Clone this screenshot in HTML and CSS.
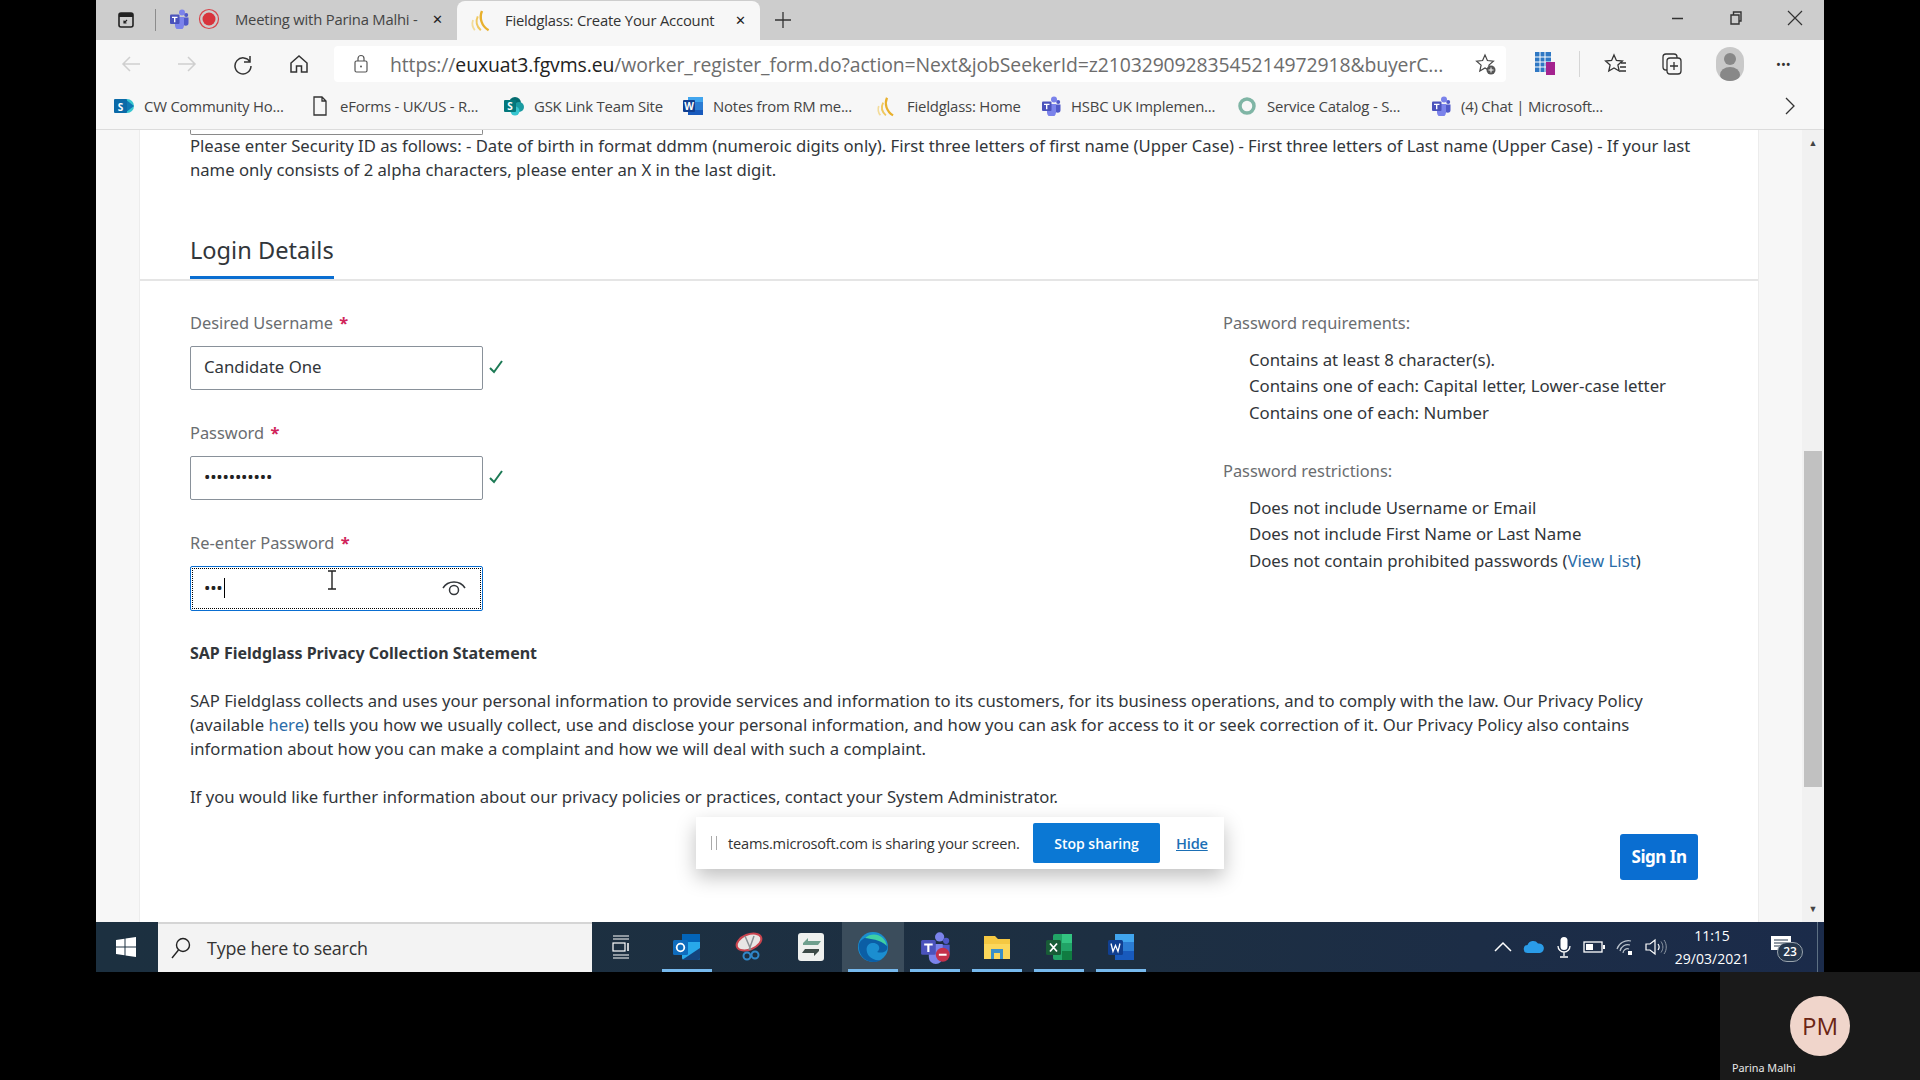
FILE: index.html
```html
<!DOCTYPE html>
<html lang="en">
<head>
    <meta charset="UTF-8">
    <title>Fieldglass: Create Your Account</title>
    <link rel="stylesheet" href="styles.css">
</head>
<body>
    <svg class="defs" width="0" height="0">
        <symbol id="teams" viewBox="0 0 20 20">
            <circle cx="13" cy="3.500" r="3" fill="#7b83eb"/>
            <circle cx="17.200" cy="6" r="2" fill="#5059c9"/>
            <path d="M14 8.500h5.500v5.500a2.700 2.700 0 0 1-5.500 0z" fill="#5059c9"/>
            <path d="M6 8h9v8.500a4.500 4.500 0 0 1-9 0z" fill="#7b83eb"/>
            <rect x="1" y="5.500" width="9.500" height="9.500" rx="1" fill="#4b53bc"/>
            <path d="M3 7.800h5.500v1.300H6.400v4.200H5V9.100H3z" fill="#fff"/>
        </symbol>
        <symbol id="fieldglass" viewBox="0 0 20 20">
            <path d="M2.500 10C1.500 13 2 16 4 18.500" fill="none" stroke="#f3dc9a" stroke-width="1.500"/>
            <path d="M6.500 7C4.500 11 5.500 15.500 9 18.500" fill="none" stroke="#efc860" stroke-width="1.700"/>
            <path d="M10 2.500C7.500 8 9.500 15 15.500 18.500" fill="none" stroke="#e8b02c" stroke-width="2"/>
        </symbol>
    </svg>

    <div class="screen">
        <!-- Tab strip -->
        <div class="tabstrip">
            <svg class="vtabs" width="18" height="18" viewBox="0 0 18 18"><rect x="2" y="2" width="14" height="14" rx="2" fill="none" stroke="#222" stroke-width="1.600"/><rect x="2" y="2" width="14" height="4" fill="#222"/><path d="M7 12l3-3M7 9.500V12h2.500" fill="none" stroke="#222" stroke-width="1.200"/></svg>
            <span class="tab-sep"></span>
            <div class="tab">
                <svg width="20" height="20"><use href="#teams"/></svg>
                <svg class="rec" width="22" height="22" viewBox="0 0 22 22"><circle cx="11" cy="11" r="9.500" fill="none" stroke="#d8434a" stroke-width="1.200"/><circle cx="11" cy="11" r="6.500" fill="#d8343c"/></svg>
                <span class="tab-title">Meeting with Parina Malhi -</span>
                <span class="tab-x">✕</span>
            </div>
            <div class="tab tab-active">
                <svg width="24" height="24"><use href="#fieldglass"/></svg>
                <span class="tab-title">Fieldglass: Create Your Account</span>
                <span class="tab-x">✕</span>
            </div>
            <svg class="newtab" width="18" height="18" viewBox="0 0 18 18"><path d="M9 1v16M1 9h16" stroke="#333" stroke-width="1.300"/></svg>
            <div class="winctl">
                <svg width="14" height="14" viewBox="0 0 14 14"><path d="M1 7.500h11" stroke="#333" stroke-width="1.500"/></svg>
                <svg width="14" height="14" viewBox="0 0 14 14"><path d="M2 4h8v9H2zM4.500 4V1H12v9h-2" fill="none" stroke="#333" stroke-width="1.400"/></svg>
                <svg width="16" height="16" viewBox="0 0 16 16"><path d="M1 1l14 14M15 1L1 15" stroke="#333" stroke-width="1.200"/></svg>
            </div>
        </div>

        <!-- Address bar -->
        <div class="toolbar">
            <div class="nav">
                <svg width="22" height="22" viewBox="0 0 22 22"><path d="M20 11H3M10 4l-7 7 7 7" fill="none" stroke="#cfcfcf" stroke-width="1.500"/></svg>
                <svg width="22" height="22" viewBox="0 0 22 22"><path d="M2 11h17M12 4l7 7-7 7" fill="none" stroke="#cfcfcf" stroke-width="1.500"/></svg>
                <svg width="22" height="22" viewBox="0 0 22 22"><path d="M18 3v6h-6M18 9A8 8 0 1 0 19 13" fill="none" stroke="#333" stroke-width="1.500"/></svg>
                <svg width="22" height="22" viewBox="0 0 22 22"><path d="M3 10l8-7 8 7v9h-5.500v-6h-5v6H3z" fill="none" stroke="#333" stroke-width="1.500"/></svg>
            </div>
            <div class="addressbar">
                <svg width="18" height="20" viewBox="0 0 18 20"><rect x="3" y="7" width="12" height="11" rx="1.500" fill="none" stroke="#555" stroke-width="1.200"/><path d="M6 7V4.500a3 3 0 0 1 6 0V7" fill="none" stroke="#555" stroke-width="1.200"/><circle cx="9" cy="12.500" r="1" fill="#555"/></svg>
                <span class="url">https://<b>euxuat3.fgvms.eu</b>/worker_register_form.do?action=Next&amp;jobSeekerId=z21032909283545214972918&amp;buyerC...</span>
                <svg class="addfav" width="22" height="24" viewBox="0 0 22 24"><path d="M10 3l2.400 5.500 6 .6-4.500 4 1.300 5.900L10 16l-5.200 3 1.300-5.900-4.500-4 6-.6z" fill="none" stroke="#444" stroke-width="1.200"/><circle cx="16" cy="18" r="4.500" fill="#555"/><path d="M16 15.500v5M13.500 18h5" stroke="#fff"/></svg>
            </div>
            <div class="tools">
                <svg class="tool-grid" width="22" height="26" viewBox="0 0 22 26"><rect x="1" y="1" width="16" height="20" fill="#2f78c4"/><path d="M1 6h16M1 11h16M1 16h16M6 1v20M11 1v20" stroke="#fff"/><rect x="12" y="11" width="9" height="13" fill="#a4238f"/></svg>
                <span class="tool-sep"></span>
                <svg class="tool-fav" width="24" height="24" viewBox="0 0 24 24"><path d="M10 3l2.400 5.500 6 .6-4.500 4 1.300 5.900L10 16l-5.200 3 1.300-5.900-4.500-4 6-.6zM17 11h5M16 15h6M16 19h6" fill="none" stroke="#333" stroke-width="1.300"/></svg>
                <svg class="tool-col" width="24" height="26" viewBox="0 0 24 26"><rect x="7" y="7" width="14" height="16" rx="3" fill="none" stroke="#333" stroke-width="1.300"/><path d="M7 19H6a3 3 0 0 1-3-3V6a3 3 0 0 1 3-3h8a3 3 0 0 1 3 3v1M14 11v8M10 15h8" fill="none" stroke="#333" stroke-width="1.300"/></svg>
                <span class="tool-avatar"><span class="head"></span><span class="bust"></span></span>
                <span class="tool-more">•••</span>
            </div>
        </div>

        <!-- Favourites bar -->
        <div class="favbar">
            <div class="fav">
                <svg width="22" height="20" viewBox="0 0 22 20"><circle cx="14" cy="10" r="7" fill="#37c6d0"/><path d="M12 3l9 7-9 7z" fill="#0f78b4"/><rect x="1" y="3" width="13" height="14" rx="1" fill="#0b6aa8"/><text x="7.500" y="14.500" class="badge-text" text-anchor="middle">S</text></svg>
                <span>CW Community Ho...</span>
            </div>
            <div class="fav"><svg width="18" height="20" viewBox="0 0 16 20"><path d="M2 1h8l4 4v14H2zM10 1v4h4" fill="none" stroke="#333" stroke-width="1.300"/></svg><span>eForms - UK/US - R...</span></div>
            <div class="fav">
                <svg width="22" height="20" viewBox="0 0 22 20"><circle cx="12" cy="7" r="6" fill="#036c70"/><circle cx="16" cy="11" r="5" fill="#1a9ba1"/><circle cx="12" cy="15" r="4.500" fill="#37c6d0"/><rect x="1" y="4" width="12" height="12" rx="1" fill="#03787c"/><text x="7" y="14" class="badge-text" text-anchor="middle">S</text></svg>
                <span>GSK Link Team Site</span>
            </div>
            <div class="fav">
                <svg width="22" height="20" viewBox="0 0 22 20"><rect x="6" y="1" width="15" height="18" rx="1" fill="#2b7cd3"/><rect x="6" y="1" width="15" height="5" fill="#41a5ee"/><rect x="6" y="14" width="15" height="5" fill="#185abd"/><rect x="1" y="4" width="12" height="12" rx="1" fill="#103f91"/><text x="7" y="14" class="badge-text" text-anchor="middle">W</text></svg>
                <span>Notes from RM me...</span>
            </div>
            <div class="fav"><svg width="22" height="22"><use href="#fieldglass"/></svg><span>Fieldglass: Home</span></div>
            <div class="fav"><svg width="20" height="20"><use href="#teams"/></svg><span>HSBC UK Implemen...</span></div>
            <div class="fav"><svg width="20" height="20" viewBox="0 0 20 20"><circle cx="10" cy="10" r="7" fill="none" stroke="#7fb5a5" stroke-width="3.500"/></svg><span>Service Catalog - S...</span></div>
            <div class="fav"><svg width="20" height="20"><use href="#teams"/></svg><span>(4) Chat | Microsoft...</span></div>
            <svg class="fav-more" width="12" height="20" viewBox="0 0 12 20"><path d="M2 2l8 8-8 8" fill="none" stroke="#333" stroke-width="1.300"/></svg>
        </div>

        <!-- Page -->
        <div class="viewport">
            <div class="gutter"></div>
            <main class="sheet">
                <div class="stub"></div>
                <p class="hint">Please enter Security ID as follows: - Date of birth in format ddmm (numeroic digits only). First three letters of first name (Upper Case) - First three letters of Last name (Upper Case) - If your last name only consists of 2 alpha characters, please enter an X in the last digit.</p>

                <div class="section-head"><h2>Login Details</h2></div>

                <div class="login-row">
                    <div class="login-fields">
                        <div class="field">
                            <label>Desired Username <span class="req">*</span></label>
                            <div class="input-row">
                                <div class="input">Candidate One</div>
                                <svg class="ok" width="16" height="16" viewBox="0 0 16 16"><path d="M2 9l4 4 8-11" fill="none" stroke="#1c7a55" stroke-width="2"/></svg>
                            </div>
                        </div>
                        <div class="field">
                            <label>Password <span class="req">*</span></label>
                            <div class="input-row">
                                <div class="input dots">•••••••••••</div>
                                <svg class="ok" width="16" height="16" viewBox="0 0 16 16"><path d="M2 9l4 4 8-11" fill="none" stroke="#1c7a55" stroke-width="2"/></svg>
                            </div>
                        </div>
                        <div class="field">
                            <label>Re-enter Password <span class="req">*</span></label>
                            <div class="input-row">
                                <div class="input dots input-focus">
                                    <span>•••</span><span class="caret"></span>
                                    <svg class="eye" width="24" height="18" viewBox="0 0 24 18"><path d="M1 9C6 1 18 1 23 9" fill="none" stroke="#32363a" stroke-width="1.500"/><circle cx="12" cy="11" r="4.500" fill="none" stroke="#32363a" stroke-width="1.500"/></svg>
                                </div>
                            </div>
                        </div>
                    </div>
                    <div class="rules">
                        <div class="rules-title">Password requirements:</div>
                        <ul>
                            <li>Contains at least 8 character(s).</li>
                            <li>Contains one of each: Capital letter, Lower-case letter</li>
                            <li>Contains one of each: Number</li>
                        </ul>
                        <div class="rules-title">Password restrictions:</div>
                        <ul>
                            <li>Does not include Username or Email</li>
                            <li>Does not include First Name or Last Name</li>
                            <li>Does not contain prohibited passwords (<a>View List</a>)</li>
                        </ul>
                    </div>
                </div>

                <div class="privacy">
                    <h4>SAP Fieldglass Privacy Collection Statement</h4>
                    <p>SAP Fieldglass collects and uses your personal information to provide services and information to its customers, for its business operations, and to comply with the law. Our Privacy Policy (available <a>here</a>) tells you how we usually collect, use and disclose your personal information, and how you can ask for access to it or seek correction of it. Our Privacy Policy also contains information about how you can make a complaint and how we will deal with such a complaint.</p>
                    <p>If you would like further information about our privacy policies or practices, contact your System Administrator.</p>
                </div>

                <div class="actions"><button class="signin">Sign In</button></div>
            </main>
            <div class="gutter"></div>
            <div class="scrollbar">
                <span class="arrow">▲</span>
                <div class="track"><div class="thumb"></div></div>
                <span class="arrow">▼</span>
            </div>
        </div>

        <!-- Screen share notice -->
        <div class="sharebar">
            <span class="grip"></span>
            <span class="share-text">teams.microsoft.com is sharing your screen.</span>
            <button class="stop">Stop sharing</button>
            <a class="hide">Hide</a>
        </div>

        <!-- Mouse pointer -->
        <svg class="ibeam" width="12" height="20" viewBox="0 0 12 20"><path d="M2 1h8M6 1v18M2 19h8" fill="none" stroke="#222" stroke-width="1.400"/></svg>

        <!-- Taskbar -->
        <div class="taskbar">
            <svg class="start" width="20" height="20" viewBox="0 0 20 20"><path d="M0 3l8.500-1.300V9.500H0zM9.500 1.500L20 0v9.500H9.500zM0 10.500h8.500v7.800L0 17zM9.500 10.500H20V20L9.500 18.500z" fill="#fff"/></svg>
            <div class="search">
                <svg width="22" height="24" viewBox="0 0 22 24"><circle cx="13" cy="9" r="6.500" fill="none" stroke="#222" stroke-width="1.400"/><path d="M8.500 14L2 22" stroke="#222" stroke-width="1.400"/></svg>
                <span>Type here to search</span>
            </div>
            <svg class="taskview" width="20" height="24" viewBox="0 0 20 24"><path d="M2 1h16M2 4h16M2 20h16M2 23h16" stroke="#fff"/><rect x="2" y="8" width="12" height="8" fill="none" stroke="#fff" stroke-width="1.200"/><path d="M17 8v8" stroke="#fff" stroke-width="1.500"/></svg>
            <div class="apps">
                <div class="app app-open">
                    <svg width="30" height="30" viewBox="0 0 30 30"><rect x="10" y="2" width="18" height="26" rx="2" fill="#28a8ea"/><rect x="10" y="2" width="18" height="8" fill="#0364b8"/><path d="M10 28l18-12v10a2 2 0 0 1-2 2z" fill="#14447d"/><rect x="1" y="8" width="15" height="15" rx="1.500" fill="#0f6cbd"/><circle cx="8.500" cy="15.500" r="3.800" fill="none" stroke="#fff" stroke-width="1.800"/></svg>
                </div>
                <div class="app">
                    <svg width="30" height="32" viewBox="0 0 30 32"><ellipse cx="15" cy="11" rx="13" ry="7.500" transform="rotate(-22 15 11)" fill="#e8e6e4" stroke="#c9444e" stroke-width="2"/><path d="M11 5l6 14M20 5l-5 14" stroke="#8a8f92" stroke-width="1.500"/><circle cx="13" cy="25" r="3.500" fill="none" stroke="#2f86c8" stroke-width="2"/><circle cx="21" cy="24" r="3.500" fill="none" stroke="#2f86c8" stroke-width="2"/></svg>
                </div>
                <div class="app">
                    <svg width="30" height="32" viewBox="0 0 30 32"><rect x="2" y="2" width="26" height="28" rx="3" fill="#eef0ee"/><path d="M7 12l5-5v3h13l-3 4H7z" fill="#6fa08e"/><path d="M23 20l-5 5v-3H6l3-4h14z" fill="#3c4a47"/></svg>
                </div>
                <div class="app app-active app-open">
                    <svg width="32" height="32" viewBox="0 0 32 32"><circle cx="16" cy="16" r="15" fill="#1b8ed0"/><path d="M2 13C5 4 24 1 30 14c2 6-4 9-10 7 5-4 1-10-5-9-6 1-7 8-3 13 3 3 7 5 12 4-10 6-24-2-22-16z" fill="#0b5ea5"/><path d="M8 7c8-7 20-3 22 8-7-7-17-7-22-8z" fill="#3fd0a4"/></svg>
                </div>
                <div class="app app-open">
                    <svg width="32" height="34" viewBox="0 0 20 22"><use href="#teams"/><circle cx="15" cy="16" r="4.500" fill="#c4314b"/><path d="M12.500 16h5" stroke="#fff" stroke-width="1.300"/></svg>
                </div>
                <div class="app app-open">
                    <svg width="30" height="30" viewBox="0 0 30 30"><path d="M2 4h11l3 3h12v20H2z" fill="#f5c842"/><rect x="2" y="12" width="26" height="15" fill="#fbd75b"/><rect x="9" y="17" width="12" height="10" fill="#3a8fc8"/><rect x="12" y="21" width="6" height="6" fill="#fbd75b"/></svg>
                </div>
                <div class="app app-open">
                    <svg width="30" height="30" viewBox="0 0 30 30"><rect x="9" y="2" width="19" height="26" rx="2" fill="#21a366"/><rect x="18" y="2" width="10" height="9" fill="#33c481"/><rect x="18" y="19" width="10" height="9" fill="#107c41"/><rect x="2" y="8" width="15" height="15" rx="1.500" fill="#185c37"/><path d="M6 11.500l7 8M13 11.500l-7 8" stroke="#fff" stroke-width="1.800"/></svg>
                </div>
                <div class="app app-open">
                    <svg width="30" height="30" viewBox="0 0 30 30"><rect x="9" y="2" width="19" height="26" rx="2" fill="#2b7cd3"/><rect x="9" y="2" width="19" height="8" fill="#41a5ee"/><rect x="9" y="19" width="19" height="9" fill="#185abd"/><rect x="2" y="8" width="15" height="15" rx="1.500" fill="#103f91"/><path d="M5 11.500l2 8 2.500-6 2.500 6 2-8" fill="none" stroke="#fff" stroke-width="1.300"/></svg>
                </div>
            </div>
            <div class="tray">
                <svg width="18" height="12" viewBox="0 0 18 12"><path d="M1 10l8-8 8 8" fill="none" stroke="#fff" stroke-width="1.500"/></svg>
                <svg width="22" height="14" viewBox="0 0 22 14"><path d="M5 13a4 4 0 0 1-.5-8A6 6 0 0 1 15 3.500 4.800 4.800 0 0 1 17 13z" fill="#2a9ce8"/></svg>
                <svg width="16" height="22" viewBox="0 0 16 22"><rect x="4.500" y="1" width="7" height="13" rx="3.500" fill="#fff"/><path d="M2 10a6 6 0 0 0 12 0M8 16v4M4 21h8" fill="none" stroke="#fff" stroke-width="1.300"/></svg>
                <svg width="22" height="12" viewBox="0 0 22 12"><rect x="1" y="1" width="18" height="10" fill="none" stroke="#fff" stroke-width="1.300"/><rect x="3" y="3" width="7" height="6" fill="#fff"/><rect x="20" y="4" width="2" height="4" fill="#fff"/></svg>
                <svg width="18" height="18" viewBox="0 0 18 18"><path d="M1 11a12 12 0 0 1 14-8M4 13a8 8 0 0 1 10-6M7 15a4.500 4.500 0 0 1 6-4" fill="none" stroke="#b9c2cc" stroke-width="1.200"/><rect x="12" y="13" width="4" height="4" fill="#fff"/></svg>
                <svg width="22" height="18" viewBox="0 0 22 18"><path d="M1 6h4l5-4v14l-5-4H1z" fill="none" stroke="#fff" stroke-width="1.200"/><path d="M13 6c1.500 2 1.500 4 0 6" fill="none" stroke="#fff" stroke-width="1.200"/><path d="M16 3.500c2.500 3.500 2.500 7.500 0 11M19 2c3 4 3 10 0 14" fill="none" stroke="#8c97a3" stroke-width="1"/></svg>
            </div>
            <div class="clock"><span>11:15</span><span>29/03/2021</span></div>
            <div class="notify">
                <svg width="20" height="17" viewBox="0 0 20 17"><path d="M0 0h20v14H0z" fill="#fff"/><path d="M3 4h14M3 7h14M3 10h10" stroke="#25374d" stroke-width="1.200"/></svg>
                <span class="notify-count">23</span>
            </div>
            <span class="show-desktop"></span>
        </div>
    </div>

    <!-- Meeting participant tile -->
    <div class="bottom-strip">
        <div class="tile">
            <div class="avatar">PM</div>
            <div class="tile-name">Parina Malhi</div>
        </div>
    </div>
</body>
</html>
```

FILE: styles.css
```css
/* Basic Reset */
* {
    margin: 0;
    padding: 0;
    box-sizing: border-box;
}

body {
    width: 1920px;
    height: 1080px;
    background-color: #000;
    font-family: 'Noto Sans', sans-serif;
    color: #32363a;
    overflow: hidden;
}

.defs {
    position: absolute;
}

.screen {
    position: relative;
    width: 1728px;
    height: 972px;
    margin-left: 96px;
    display: flex;
    flex-direction: column;
    background-color: #fff;
}

/* Tab strip */
.tabstrip {
    height: 40px;
    display: flex;
    align-items: center;
    background-color: #cdcdcd;
    font-family: 'Open Sans', sans-serif;
    font-size: 14.800px;
    color: #444;
}

.vtabs {
    margin-left: 21px;
}

.tab-sep {
    width: 1px;
    height: 22px;
    margin-left: 20px;
    background-color: #8c8c8c;
}

.tab {
    height: 40px;
    display: flex;
    align-items: center;
    width: 301px;
    padding-left: 13px;
    gap: 6px;
    padding-bottom: 2px;
}

.tab .rec {
    margin-left: 3px;
}

.tab-title {
    margin-left: 9px;
    white-space: nowrap;
    flex: 1;
    letter-spacing: -0.2px;
}

.tab-x {
    font-size: 13px;
    color: #222;
    margin-right: 14px;
}

.tab-active {
    width: 303px;
    padding-left: 13px;
    margin-top: 2px;
    background-color: #f7f7f7;
    border-radius: 8px 8px 0 0;
    color: #333;
}

.tab-active .tab-title {
    margin-left: 5px;
}

.newtab {
    margin-left: 14px;
}

.winctl {
    margin-left: auto;
    margin-right: 21px;
    display: flex;
    align-items: center;
    gap: 44px;
    margin-top: -4px;
}

/* Address bar */
.toolbar {
    height: 48px;
    display: flex;
    align-items: center;
    background-color: #f7f7f7;
}

.nav {
    width: 238px;
    padding-left: 24px;
    display: flex;
    align-items: center;
    gap: 34px;
}

.addressbar {
    width: 1172px;
    height: 36px;
    display: flex;
    align-items: center;
    padding-left: 18px;
    background-color: #fff;
    border-radius: 4px;
}

.url {
    margin-left: 20px;
    font-family: 'Open Sans', sans-serif;
    font-size: 19.400px;
    letter-spacing: -0.1px;
    color: #6d6d6d;
    white-space: nowrap;
    width: 1075px;
}

.url b {
    font-weight: 400;
    color: #222;
}

.addfav {
    margin-left: 10px;
}

.tools {
    display: flex;
    align-items: center;
    flex: 1;
    padding-left: 28px;
}

.tool-sep {
    width: 1px;
    height: 26px;
    margin-left: 23px;
    background-color: #d6d6d6;
}

.tool-fav {
    margin-left: 24px;
}

.tool-col {
    margin-left: 32px;
}

.tool-avatar {
    width: 28px;
    height: 34px;
    margin-left: 32px;
    position: relative;
    display: block;
    border-radius: 14px;
    background-color: #c9c9c9;
    overflow: hidden;
}

.tool-avatar .head {
    position: absolute;
    left: 8px;
    top: 6px;
    width: 12px;
    height: 12px;
    border-radius: 50%;
    background-color: #888;
}

.tool-avatar .bust {
    position: absolute;
    left: 4px;
    top: 20px;
    width: 20px;
    height: 16px;
    border-radius: 50%;
    background-color: #888;
}

.tool-more {
    margin-left: 32px;
    font-size: 13px;
    letter-spacing: 0;
    color: #333;
}

/* Favourites bar */
.favbar {
    height: 42px;
    display: grid;
    grid-template-columns: 196px 194px 179px 194px 164px 196px 194px 1fr auto;
    align-items: center;
    padding-left: 17px;
    padding-bottom: 5px;
    background-color: #f7f7f7;
    border-bottom: 1px solid #dcdcdc;
    font-family: 'Open Sans', sans-serif;
    font-size: 14.900px;
    letter-spacing: -0.2px;
    color: #444;
}

.fav {
    display: flex;
    align-items: center;
    gap: 9px;
    white-space: nowrap;
}

.fav svg {
    width: 22px;
    flex: none;
}

.badge-text {
    font-family: 'Open Sans', sans-serif;
    font-size: 10px;
    font-weight: 700;
    fill: #fff;
}

.fav-more {
    margin-right: 28px;
}

/* Page */
.viewport {
    flex: 1;
    display: flex;
    overflow: hidden;
    background-color: #f7f7f7;
}

.gutter {
    width: 43px;
}

.sheet {
    width: 1621px;
    background-color: #fff;
    border-left: 1px solid #ececec;
    border-right: 1px solid #ececec;
    font-size: 16.680px;
    line-height: 24.300px;
    overflow: hidden;
}

.stub {
    width: 293px;
    height: 5px;
    margin-left: 50px;
    border: 1px solid #8a8a8a;
    border-top: none;
    border-radius: 0 0 2px 2px;
}

.hint {
    margin: -1px 50px 0 50px;
}

.section-head {
    height: 98px;
    display: flex;
    align-items: flex-end;
    padding-left: 50px;
    border-bottom: 2px solid #e5e5e5;
}

.section-head h2 {
    font-size: 23.600px;
    font-weight: 400;
    line-height: 33px;
    padding-bottom: 9px;
    border-bottom: 3px solid #0a6ed1;
}

.login-row {
    display: flex;
    padding-top: 30px;
}

.login-fields {
    width: 1083px;
    padding-left: 50px;
}

.field {
    margin-bottom: 31px;
}

.field label {
    display: block;
    font-size: 16.400px;
    color: #6a6d70;
    line-height: 24px;
    margin-bottom: 11px;
}

.req {
    color: #d0245a;
    font-weight: 700;
    margin-left: 2px;
}

.input-row {
    display: flex;
    align-items: center;
}

.input {
    width: 293px;
    height: 44px;
    padding: 0 13px;
    display: flex;
    align-items: center;
    font-size: 16.800px;
    border: 1px solid #89919a;
    border-radius: 2px;
}

.ok {
    margin-left: 5px;
    margin-top: -2px;
}

.input.dots {
    font-size: 17px;
    letter-spacing: -0.2px;
    color: #222;
}

.input-focus {
    height: 45px;
    border-color: #0a6ed1;
    outline: 1px dotted #000;
    outline-offset: -3px;
    position: relative;
}

.caret {
    width: 1px;
    height: 20px;
    background-color: #000;
    margin-left: 1px;
}

.eye {
    position: absolute;
    right: 16px;
    top: 12px;
}

.rules {
    color: #32363a;
    font-size: 16.800px;
}

.rules-title {
    font-size: 16.400px;
    color: #6a6d70;
    line-height: 24px;
}

.rules ul {
    list-style: none;
    margin: 12px 0 32px 26px;
}

.rules li {
    line-height: 26.700px;
}

a {
    color: #2b6ca8;
}

.privacy {
    margin: -1px 50px 0 50px;
}

.privacy h4 {
    font-size: 16px;
    font-weight: 700;
    line-height: 24px;
    margin-bottom: 24px;
}

.privacy p {
    margin-bottom: 24px;
}

.actions {
    display: flex;
    justify-content: flex-end;
    padding-right: 60px;
    margin-top: 1px;
}

.signin {
    width: 78px;
    height: 46px;
    border: none;
    border-radius: 3px;
    background-color: #0a6ed1;
    color: #fff;
    font-family: inherit;
    font-size: 17px;
    font-weight: 700;
    letter-spacing: -0.5px;
}

.scrollbar {
    width: 22px;
    display: flex;
    flex-direction: column;
    align-items: center;
    background-color: #f1f1f1;
}

.arrow {
    height: 26px;
    font-size: 9px;
    line-height: 26px;
    color: #444;
}

.track {
    flex: 1;
    width: 100%;
    padding: 295px 2px 0 2px;
}

.thumb {
    height: 336px;
    background-color: #c1c1c1;
}

/* Screen share notice */
.sharebar {
    position: absolute;
    left: 600px;
    top: 817px;
    width: 528px;
    height: 52px;
    display: flex;
    align-items: center;
    background-color: #fff;
    box-shadow: 0 8px 20px rgba(0, 0, 0, 0.25);
    font-family: 'Open Sans', sans-serif;
    font-size: 14.600px;
    letter-spacing: -0.2px;
}

.grip {
    width: 6px;
    height: 14px;
    margin-left: 15px;
    border-left: 1px solid #aaa;
    border-right: 1px solid #aaa;
}

.share-text {
    margin-left: 11px;
    width: 305px;
    white-space: nowrap;
    color: #333;
}

.stop {
    width: 127px;
    height: 40px;
    border: none;
    border-radius: 2px;
    background-color: #0b78d4;
    color: #fff;
    font-family: inherit;
    font-size: 14px;
    font-weight: 600;
}

.hide {
    margin-left: 16px;
    text-decoration: underline;
    color: #1b6fb5;
    font-weight: 600;
}

.ibeam {
    position: absolute;
    left: 230px;
    top: 570px;
}

/* Taskbar */
.taskbar {
    height: 50px;
    display: flex;
    align-items: center;
    background: linear-gradient(to right, #1c3040, #1d2f42 60%, #1b2b4a);
    color: #fff;
}

.start {
    margin-left: 20px;
}

.search {
    width: 434px;
    height: 50px;
    margin-left: 22px;
    padding-left: 12px;
    display: flex;
    align-items: center;
    gap: 15px;
    background-color: #f3f3f3;
    border-top: 2px solid #d5d5d5;
    font-family: 'Open Sans', sans-serif;
    font-size: 17.900px;
    letter-spacing: -0.2px;
    color: #333;
}

.taskview {
    margin-left: 19px;
}

.apps {
    display: flex;
    margin-left: 25px;
}

.app {
    width: 62px;
    height: 50px;
    display: flex;
    align-items: center;
    justify-content: center;
    position: relative;
}

.app-open::after {
    content: "";
    position: absolute;
    left: 6px;
    right: 6px;
    bottom: 0;
    height: 3px;
    background-color: #76b9ed;
}

.app-active {
    background-color: #3b4d5c;
}

.tray {
    display: flex;
    align-items: center;
    margin-left: 342px;
    gap: 11px;
}

.clock {
    width: 90px;
    display: flex;
    flex-direction: column;
    align-items: center;
    font-family: 'Open Sans', sans-serif;
    font-size: 14px;
    line-height: 23px;
}

.notify {
    position: relative;
    margin-left: 14px;
    width: 30px;
    height: 30px;
    display: flex;
    padding-top: 4px;
}

.notify-count {
    position: absolute;
    left: 6px;
    top: 10px;
    width: 26px;
    height: 20px;
    border: 1px solid #9aa4ae;
    border-radius: 10px;
    background-color: #25374d;
    font-family: 'Open Sans', sans-serif;
    font-size: 12px;
    font-weight: 600;
    line-height: 18px;
    text-align: center;
}

.show-desktop {
    width: 1px;
    height: 50px;
    margin-left: auto;
    margin-right: 6px;
    background-color: #5d7083;
}

/* Meeting participant tile */
.bottom-strip {
    height: 108px;
    display: flex;
    justify-content: flex-end;
}

.tile {
    width: 200px;
    height: 108px;
    padding: 24px 12px 0 12px;
    background-color: #1a1a1a;
}

.avatar {
    width: 60px;
    height: 60px;
    margin-left: 58px;
    border-radius: 50%;
    background-color: #f0d5cb;
    color: #6b2514;
    font-family: 'Open Sans', sans-serif;
    font-size: 24px;
    line-height: 60px;
    text-align: center;
}

.tile-name {
    margin-top: 4px;
    font-size: 10.800px;
    line-height: 16px;
    color: #e8e8e8;
}
```
